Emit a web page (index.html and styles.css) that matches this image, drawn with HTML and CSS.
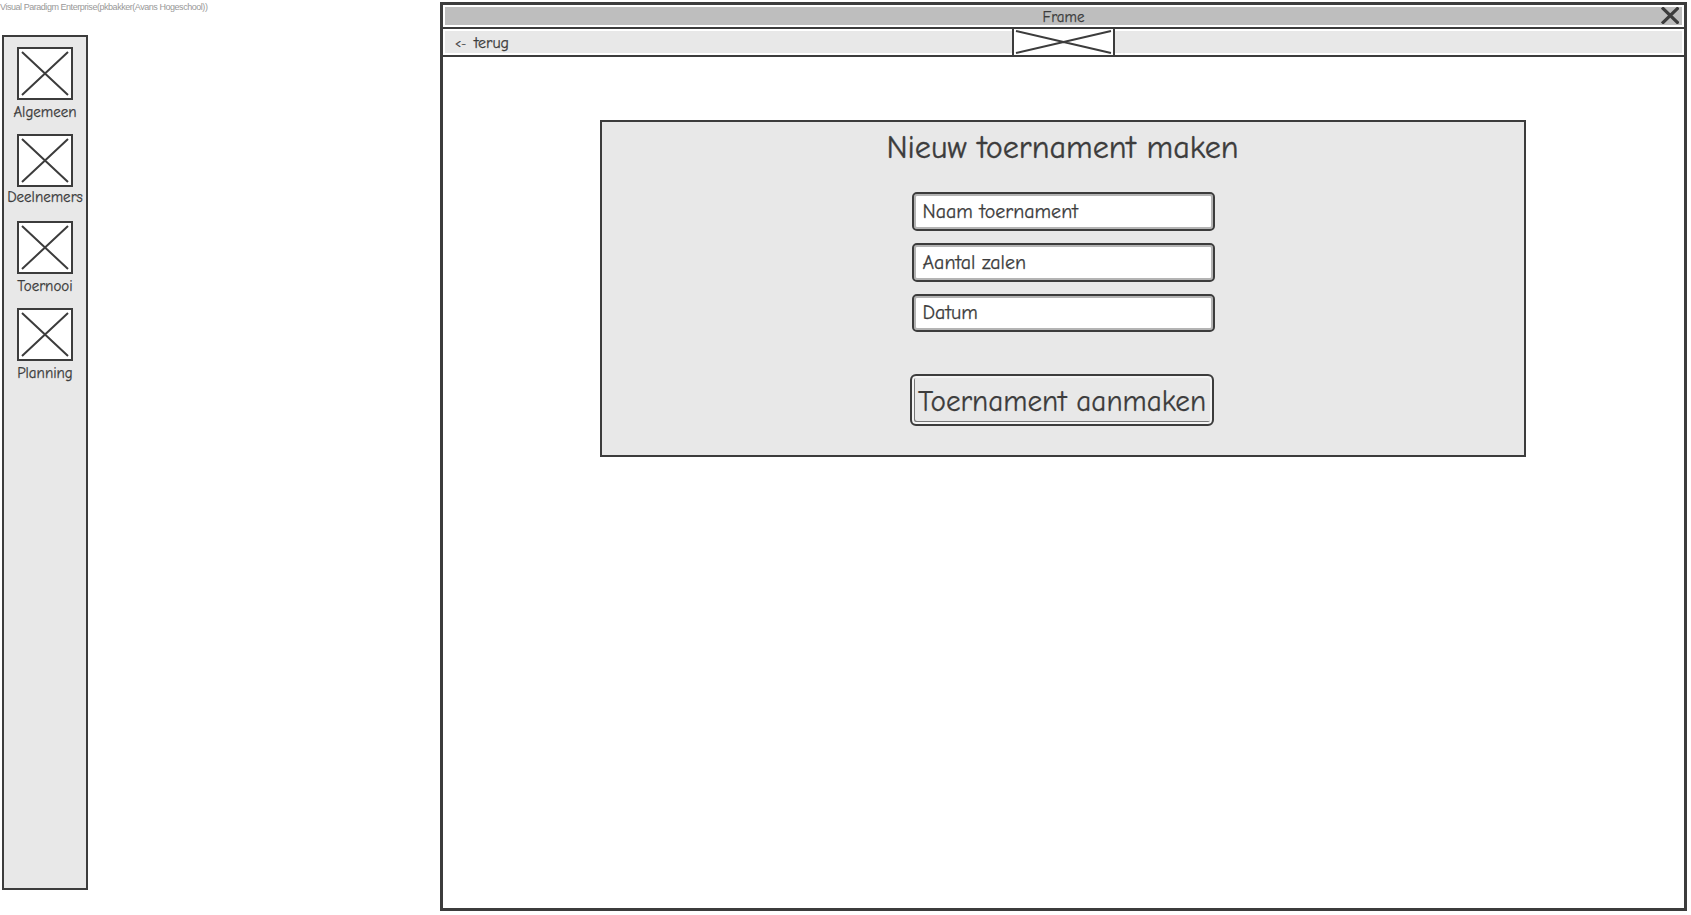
FILE: index.html
```html
<!DOCTYPE html>
<html lang="nl">
<head>
<meta charset="utf-8">
<title>Nieuw toernament maken</title>
<link rel="stylesheet" href="styles.css">
</head>
<body>
<div class="canvas">
  <div class="left-col">
    <div class="watermark">Visual Paradigm Enterprise(pkbakker(Avans Hogeschool))</div>
    <nav class="sidebar">
      <div class="nav-item">
        <svg class="placeholder" viewBox="0 0 52 49" preserveAspectRatio="none"><path d="M3 3L49 46M49 3L3 46"/></svg>
        <span class="nav-label">Algemeen</span>
      </div>
      <div class="nav-item">
        <svg class="placeholder" viewBox="0 0 52 49" preserveAspectRatio="none"><path d="M3 3L49 46M49 3L3 46"/></svg>
        <span class="nav-label nav-label-tight">Deelnemers</span>
      </div>
      <div class="nav-item">
        <svg class="placeholder" viewBox="0 0 52 49" preserveAspectRatio="none"><path d="M3 3L49 46M49 3L3 46"/></svg>
        <span class="nav-label">Toernooi</span>
      </div>
      <div class="nav-item">
        <svg class="placeholder" viewBox="0 0 52 49" preserveAspectRatio="none"><path d="M3 3L49 46M49 3L3 46"/></svg>
        <span class="nav-label">Planning</span>
      </div>
    </nav>
  </div>
  <main class="frame">
    <div class="titlebar">
      <div class="title-fill">
        <span class="title-text">Frame</span>
        <svg class="close-icon" viewBox="0 0 18 17"><path d="M1 0.5L17.5 16.5M17.5 0.5L1 16.5"/></svg>
      </div>
    </div>
    <div class="toolbar">
      <div class="tool-fill"><span class="back-arrow">&lt;-</span><span class="back-link">terug</span></div>
      <svg class="toolbar-image" viewBox="0 0 99 26" preserveAspectRatio="none"><path d="M2 2L97 24M97 2L2 24"/></svg>
    </div>
    <section class="panel">
      <h1 class="panel-title">Nieuw toernament maken</h1>
      <div class="fields">
        <div class="field">Naam toernament</div>
        <div class="field">Aantal zalen</div>
        <div class="field field-short">Datum</div>
      </div>
      <div class="submit">Toernament aanmaken</div>
    </section>
  </main>
</div>
</body>
</html>
```
FILE: styles.css
```css
* { box-sizing: border-box; }
html, body { margin: 0; height: 100%; overflow: hidden; background: #fff; }
body { font-family: "Comic Sans MS", "Comic Neue", cursive; color: #3c3c3c; -webkit-text-stroke: 0.25px #3c3c3c; }
.canvas { display: flex; height: 915px; }
.left-col { width: 440px; flex: none; }
.watermark { font-family: "Liberation Sans", sans-serif; font-size: 9px; letter-spacing: -0.46px; line-height: 14px; height: 35px; color: #999; white-space: nowrap; -webkit-text-stroke: 0; }
.sidebar { margin-left: 2px; width: 86px; height: 855px; background: #e8e8e8; border: 2px solid #3c3c3c; padding-top: 10px; }
.nav-item { height: 87px; display: flex; flex-direction: column; align-items: center; }
.placeholder { width: 56px; height: 53px; flex: none; background: #fff; border: 2px solid #3c3c3c; }
.placeholder path { stroke: #3c3c3c; stroke-width: 2; fill: none; vector-effect: non-scaling-stroke; }
.nav-label { font-size: 15px; line-height: 20px; margin-top: 2px; white-space: nowrap; }
.nav-label-tight { margin-top: 0; }
.frame { margin-top: 2px; width: 1247px; height: 909px; border: 3px solid #3c3c3c; }
.titlebar { padding: 2px; border-bottom: 2px solid #3c3c3c; }
.title-fill { height: 18px; background: #bebebe; display: flex; justify-content: center; align-items: center; position: relative; }
.title-text { font-size: 15px; line-height: 18px; position: relative; top: 1px; }
.close-icon { position: absolute; right: 3px; top: 0; width: 18px; height: 17px; }
.close-icon path { stroke: #3c3c3c; stroke-width: 3.2; fill: none; }
.toolbar { position: relative; padding: 2px; border-bottom: 2px solid #3c3c3c; }
.tool-fill { height: 22px; background: #e8e8e8; padding-left: 10px; padding-top: 2px; display: flex; align-items: center; gap: 8px; }
.back-arrow { font-size: 12px; white-space: nowrap; }
.back-link { font-size: 16px; white-space: nowrap; }
.toolbar-image { position: absolute; left: 569px; top: -2px; width: 103px; height: 30px; background: #fff; border: 2px solid #3c3c3c; }
.toolbar-image path { stroke: #3c3c3c; stroke-width: 2; fill: none; vector-effect: non-scaling-stroke; }
.panel { margin: 63px 0 0 157px; width: 926px; height: 337px; background: #e8e8e8; border: 2px solid #3c3c3c; display: flex; flex-direction: column; align-items: center; }
.panel-title { margin: 6px 1px 0 0; height: 64px; font-size: 32.2px; line-height: 40px; font-weight: 400; white-space: nowrap; -webkit-text-stroke: 0.35px #3c3c3c; }
.fields { display: flex; flex-direction: column; gap: 12px; }
.field { width: 303px; height: 39px; background: #fff; border: 2px solid #3c3c3c; border-radius: 5px; box-shadow: inset 0 0 0 2px #b4b4b4; font-size: 20px; line-height: 35px; padding-left: 9px; white-space: nowrap; }
.field-short { height: 38px; line-height: 33px; }
.submit { margin: 42px 2px 0 0; width: 304px; height: 52px; border: 2px solid #3c3c3c; border-radius: 6px; box-shadow: inset 0 0 0 2px #f4f4f4, inset 1px -1px 0 2px #777; font-size: 29.2px; line-height: 52px; text-align: center; white-space: nowrap; }
```
